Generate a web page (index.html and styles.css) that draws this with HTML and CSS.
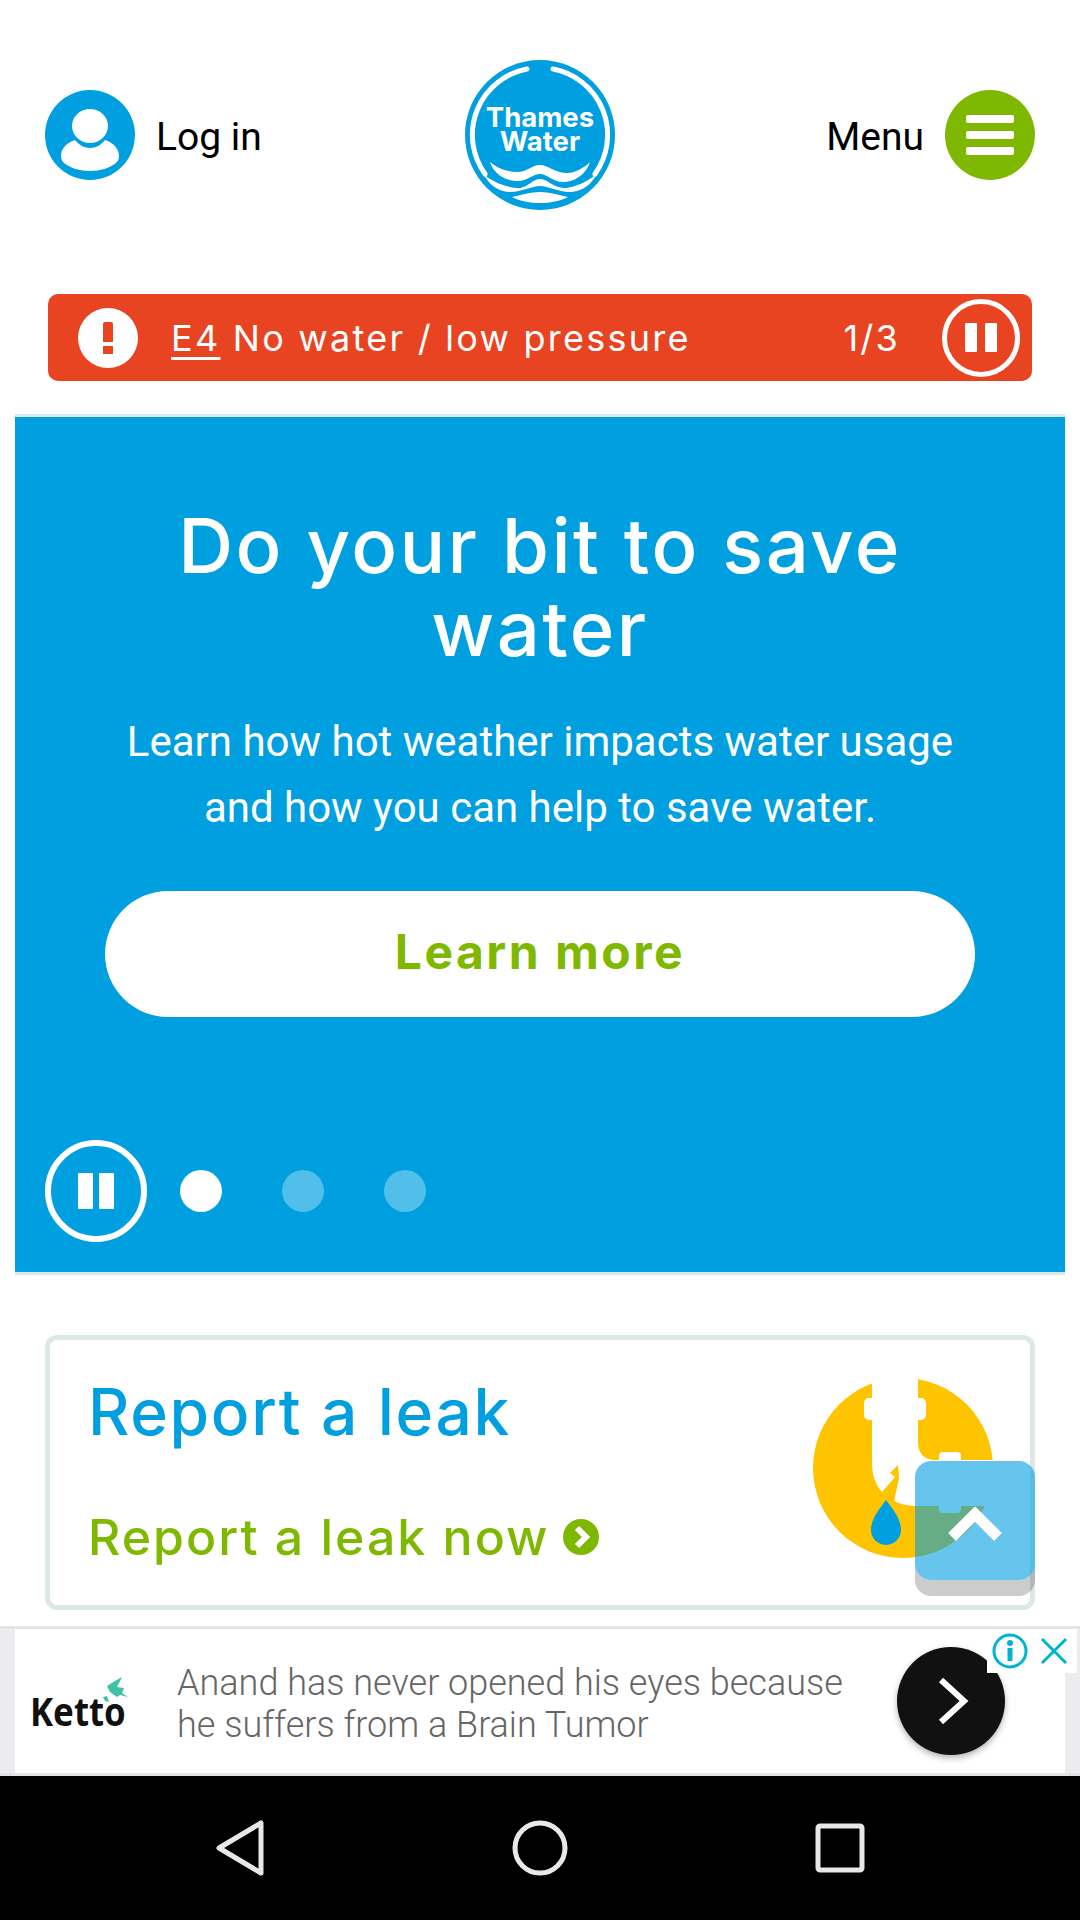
FILE: index.html

```html
<!DOCTYPE html>
<html lang="en">
<head>
    <meta charset="UTF-8">
    <meta name="viewport" content="width=device-width, initial-scale=1.0">
    <title>Thames Water</title>
    <link rel="stylesheet" href="styles.css">
</head>
<body>
<div class="screen">
    <div class="page">
        <header class="site-header">
            <a class="head-link">
                <svg class="head-icon" viewBox="0 0 90 90">
                    <circle cx="45" cy="45" r="45" fill="#009fe0"/>
                    <ellipse cx="45" cy="36" rx="18" ry="17" fill="#fff"/>
                    <path d="M30 50c4 5 9 8 15 8s11-3 15-8c9 3 14 9 14 16 0 3-1 5-3 7-6 5-16 8-26 8s-20-3-26-8c-2-2-3-4-3-7 0-7 5-13 14-16z" fill="#fff"/>
                </svg>
                <span class="head-label">Log in</span>
            </a>
            <svg class="logo" viewBox="0 0 150 150">
                <circle cx="75" cy="75" r="75" fill="#009fe0"/>
                <path d="M62 9A67 67 0 0 0 20 114" fill="none" stroke="#fff" stroke-width="5" stroke-linecap="round"/>
                <path d="M88 9A67 67 0 0 1 130 114" fill="none" stroke="#fff" stroke-width="5" stroke-linecap="round"/>
                <text class="logo-text"><tspan x="75" y="67">Thames</tspan><tspan x="75" y="91">Water</tspan></text>
                <path d="M25 102C32 108 42 112 52 112C62 112 67 105 75 105C83 105 90 113 102 113C110 113 119 108 125 102C122 112 112 122 98 122C88 122 82 114 75 114C68 114 62 121 53 121C38 121 28 112 25 102Z" fill="#fff"/>
                <path d="M18 113C24 120 40 128 55 128C63 127 68 119 75 119C82 119 88 127 98 128C110 128 126 120 132 113C128 122 122 128 112 131C98 135 85 126 75 126C65 126 52 135 38 131C30 129 22 122 18 113Z" fill="#fff"/>
                <path d="M47 137C56 135 66 132 75 132C84 132 94 135 103 137C95 141 85 143 75 143C65 143 55 141 47 137Z" fill="#fff"/>
            </svg>
            <a class="head-link">
                <span class="head-label">Menu</span>
                <span class="menu-btn"><i></i><i></i><i></i></span>
            </a>
        </header>

        <div class="alert">
            <span class="alert-icon"><i class="mark"></i><i class="dot"></i></span>
            <p class="alert-text"><u>E4</u> No water / low pressure</p>
            <span class="alert-count">1/3</span>
            <span class="pause small"><i></i><i></i></span>
        </div>

        <section class="hero">
            <h1>Do your bit to save water</h1>
            <p>Learn how hot weather impacts water usage and how you can help to save water.</p>
            <a class="hero-btn">Learn more</a>
            <div class="hero-controls">
                <span class="pause"><i></i><i></i></span>
                <span class="dots">
                    <i class="on"></i><i></i><i></i>
                </span>
            </div>
        </section>

        <section class="card">
            <div class="card-body">
                <h2>Report a leak</h2>
                <a class="card-link">Report a leak now
                    <svg class="chev" viewBox="0 0 36 36">
                        <circle cx="18" cy="18" r="18" fill="#7fb800"/>
                        <path d="M14 9l9 9-9 9" fill="none" stroke="#fff" stroke-width="6"/>
                    </svg>
                </a>
            </div>
            <svg class="leak-icon" viewBox="0 0 180 180">
                <circle cx="90" cy="90" r="90" fill="#ffc400"/>
                <!-- white pipe with its two flanges -->
                <path d="M59 0H105V20H108A5 5 0 0 1 113 25V37A5 5 0 0 1 108 42H105V64C105 76 112 82 122 82H126V78A4 4 0 0 1 130 74H144A4 4 0 0 1 148 78V82H180V128H148V131A4 4 0 0 1 144 135H130A4 4 0 0 1 126 131V128H106C90 128 78 124 69 114C62 106 59 96 59 84V42H56A5 5 0 0 1 51 37V25A5 5 0 0 1 56 20H59Z" fill="#fff"/>
                <path d="M85 87L77 95L82 99L69 114C72 118 76 121 81 124L86 100Z" fill="#ffc400"/>
                <path d="M73 122C82 134 88 142 88 152A15 15 0 0 1 58 152C58 142 64 134 73 122Z" fill="#009fe0"/>
            </svg>
            <a class="to-top">
                <svg viewBox="0 0 54 36">
                    <path d="M4 30L27 7l23 23" fill="none" stroke="#fff" stroke-width="11"/>
                </svg>
            </a>
        </section>
    </div>

    <aside class="ad">
        <div class="ad-inner">
            <div class="ketto">
                <svg viewBox="0 0 28 28">
                    <path d="M19 0L12 4L4 9L7 15L14 20L17 18L25 20L19 16L21 11L14 10Z" fill="#3fc1a5"/>
                    <path d="M0 20L4 19L6 25L2 24Z" fill="#3fc1a5"/>
                </svg>
                <span>Ketto</span>
            </div>
            <p class="ad-copy">Anand has never opened his eyes because he suffers from a Brain Tumor</p>
            <a class="ad-go">
                <svg viewBox="0 0 32 50">
                    <path d="M4 4l23 21L4 46" fill="none" stroke="#fff" stroke-width="6"/>
                </svg>
            </a>
            <div class="ad-choices">
                <svg viewBox="0 0 36 36">
                    <circle cx="18" cy="18" r="16" fill="none" stroke="#00b4d0" stroke-width="3"/>
                    <rect x="15.5" y="15" width="5" height="13" fill="#00b4d0"/>
                    <circle cx="18" cy="10" r="3" fill="#00b4d0"/>
                </svg>
                <svg viewBox="0 0 28 28">
                    <path d="M2 2l24 24M26 2L2 26" fill="none" stroke="#00b4d0" stroke-width="3"/>
                </svg>
            </div>
        </div>
    </aside>

    <nav class="sys-nav">
        <svg viewBox="0 0 56 56">
            <path d="M49 3V53L7 28Z" fill="none" stroke="#e8e8e8" stroke-width="5" stroke-linejoin="round"/>
        </svg>
        <svg viewBox="0 0 56 56">
            <circle cx="28" cy="28" r="25" fill="none" stroke="#e8e8e8" stroke-width="5"/>
        </svg>
        <svg viewBox="0 0 56 56">
            <rect x="6" y="6" width="44" height="44" rx="2" fill="none" stroke="#e8e8e8" stroke-width="5"/>
        </svg>
    </nav>
</div>
</body>
</html>
```

FILE: styles.css

```css
* {
    box-sizing: border-box;
}
html, body {
    margin: 0;
    padding: 0;
}
body {
    font-family: Roboto, sans-serif;
    background: #fff;
}
p, h1, h2 {
    margin: 0;
}
.screen {
    width: 1080px;
    height: 1920px;
    display: flex;
    flex-direction: column;
    overflow: hidden;
}
.page {
    flex: 1;
}

/* header */
.site-header {
    display: flex;
    align-items: center;
    justify-content: space-between;
    height: 150px;
    margin-top: 60px;
    padding: 0 45px;
}
.head-link {
    display: flex;
    align-items: center;
    gap: 21px;
    width: 330px;
    font-size: 39px;
    color: #000;
}
.head-link:last-child {
    justify-content: flex-end;
}
.head-label {
    padding-top: 4px;
}
.head-icon {
    width: 90px;
    height: 90px;
}
.logo {
    width: 150px;
    height: 150px;
}
.logo-text {
    font-family: Inter, sans-serif;
    font-size: 27.5px;
    font-weight: 700;
    fill: #fff;
    text-anchor: middle;
}
.menu-btn {
    width: 90px;
    height: 90px;
    border-radius: 50%;
    background: #7fb800;
    display: flex;
    flex-direction: column;
    justify-content: center;
    align-items: center;
    gap: 8px;
}
.menu-btn i {
    width: 48px;
    height: 8px;
    border-radius: 2px;
    background: #fff;
}

/* alert strip */
.alert {
    display: flex;
    align-items: center;
    height: 87px;
    margin: 84px 48px 0;
    padding: 0 12px 0 30px;
    background: #e84422;
    border-radius: 10px;
    color: #fff;
    font-family: Inter, sans-serif;
    font-size: 36px;
    letter-spacing: 2.25px;
}
.alert-icon {
    width: 60px;
    height: 60px;
    border-radius: 50%;
    background: #fff;
    display: flex;
    flex-direction: column;
    align-items: center;
    justify-content: center;
    gap: 4px;
    flex: none;
}
.alert-icon .mark {
    width: 10px;
    height: 20px;
    background: #e84422;
    border-radius: 2px 2px 0 0;
}
.alert-icon .dot {
    width: 10px;
    height: 8px;
    background: #e84422;
}
.alert-text {
    flex: 1;
    margin-left: 33px;
    white-space: nowrap;
}
.alert-text u {
    text-decoration-thickness: 3px;
    text-underline-offset: 6px;
}
.alert-count {
    margin-right: 42px;
}

/* pause button, used on the strip and the carousel */
.pause {
    width: 102px;
    height: 102px;
    border: 6px solid #fff;
    border-radius: 50%;
    display: flex;
    align-items: center;
    justify-content: center;
    gap: 6px;
    flex: none;
}
.pause i {
    width: 15px;
    height: 36px;
    background: #fff;
    border-radius: 1px;
}
.pause.small {
    width: 78px;
    height: 78px;
    border-width: 5px;
    gap: 8px;
}
.pause.small i {
    width: 12px;
    height: 29px;
}

/* carousel slide */
.hero {
    display: flex;
    flex-direction: column;
    align-items: center;
    height: 861px;
    margin: 33px 15px 0;
    padding: 87px 30px 30px;
    background: #009fe0;
    border-top: 3px solid #d5ecf2;
    border-bottom: 3px solid #dde8ea;
    color: #fff;
    text-align: center;
}
.hero h1 {
    width: 820px;
    font-family: Inter, sans-serif;
    font-size: 76px;
    font-weight: 500;
    line-height: 83px;
    letter-spacing: 2.4px;
}
.hero p {
    width: 900px;
    margin-top: 39px;
    font-size: 42px;
    line-height: 66px;
}
.hero-btn {
    display: flex;
    align-items: center;
    justify-content: center;
    width: 870px;
    height: 126px;
    margin-top: 50px;
    padding-bottom: 5px;
    border-radius: 63px;
    background: #fff;
    color: #7fb800;
    font-family: Inter, sans-serif;
    font-size: 48px;
    font-weight: 700;
    letter-spacing: 2.5px;
}
.hero-controls {
    display: flex;
    align-items: center;
    align-self: flex-start;
    margin-top: auto;
}
.dots {
    display: flex;
    gap: 60px;
    margin-left: 33px;
}
.dots i {
    width: 42px;
    height: 42px;
    border-radius: 50%;
    background: rgba(255, 255, 255, 0.32);
}
.dots i.on {
    background: #fff;
}

/* report a leak card */
.card {
    position: relative;
    display: flex;
    justify-content: space-between;
    height: 275px;
    margin: 60px 45px 0;
    padding: 35px 37px 0 38px;
    border: 5px solid #dce8e8;
    border-radius: 12px;
}
.card h2 {
    font-family: Inter, sans-serif;
    font-size: 64px;
    font-weight: 500;
    line-height: 74px;
    color: #009fe0;
    letter-spacing: 1.7px;
}
.card-link {
    display: flex;
    align-items: center;
    gap: 13px;
    margin-top: 58px;
    font-family: Inter, sans-serif;
    font-size: 50px;
    font-weight: 500;
    color: #7fb800;
    letter-spacing: 2px;
    white-space: nowrap;
}
.chev {
    width: 36px;
    height: 36px;
}
.leak-icon {
    width: 180px;
    height: 180px;
    margin-top: 3px;
}
/* see-through back-to-top button that floats over the card */
.to-top {
    position: absolute;
    right: -5px;
    top: 121px;
    width: 120px;
    height: 119px;
    border-radius: 16px;
    background: rgba(0, 159, 224, 0.6);
    box-shadow: 0 16px 0 rgba(0, 0, 0, 0.2);
}
.to-top svg {
    position: absolute;
    left: 33px;
    top: 46px;
    width: 54px;
    height: 36px;
}

/* ad banner */
.ad {
    height: 150px;
    padding: 0 15px;
    background: #ececee;
    border-top: 3px solid #e4e4e6;
    border-bottom: 3px solid #e4e4e6;
}
.ad-inner {
    position: relative;
    display: flex;
    align-items: center;
    height: 144px;
    background: #fff;
}
.ketto {
    position: relative;
    width: 162px;
    padding: 18px 0 0 15px;
    font-family: "Noto Sans", sans-serif;
    font-size: 40px;
    font-weight: 700;
    color: #111;
    flex: none;
}
.ketto span {
    display: inline-block;
    transform: scaleX(0.87);
    transform-origin: left;
}
.ketto svg {
    position: absolute;
    left: 88px;
    top: 12px;
    width: 28px;
    height: 28px;
}
.ad-copy {
    width: 690px;
    margin-top: 6px;
    font-size: 36px;
    font-weight: 300;
    line-height: 42px;
    color: #666;
}
.ad-go {
    position: absolute;
    left: 882px;
    top: 18px;
    width: 108px;
    height: 108px;
    border-radius: 50%;
    background: #111;
    box-shadow: 0 3px 6px rgba(0, 0, 0, 0.3);
    display: flex;
    align-items: center;
    justify-content: center;
}
.ad-go svg {
    width: 32px;
    height: 50px;
    margin-left: 4px;
}
.ad-choices {
    position: absolute;
    right: -12px;
    top: 0;
    width: 90px;
    height: 44px;
    background: #fff;
    display: flex;
    align-items: center;
    justify-content: space-between;
    padding: 0 9px 0 5px;
}
.ad-choices svg:first-child {
    width: 36px;
    height: 36px;
}
.ad-choices svg:last-child {
    width: 28px;
    height: 28px;
}

/* android navigation bar */
.sys-nav {
    display: flex;
    align-items: center;
    justify-content: center;
    gap: 244px;
    height: 144px;
    background: #000;
}
.sys-nav svg {
    width: 56px;
    height: 56px;
}
```
